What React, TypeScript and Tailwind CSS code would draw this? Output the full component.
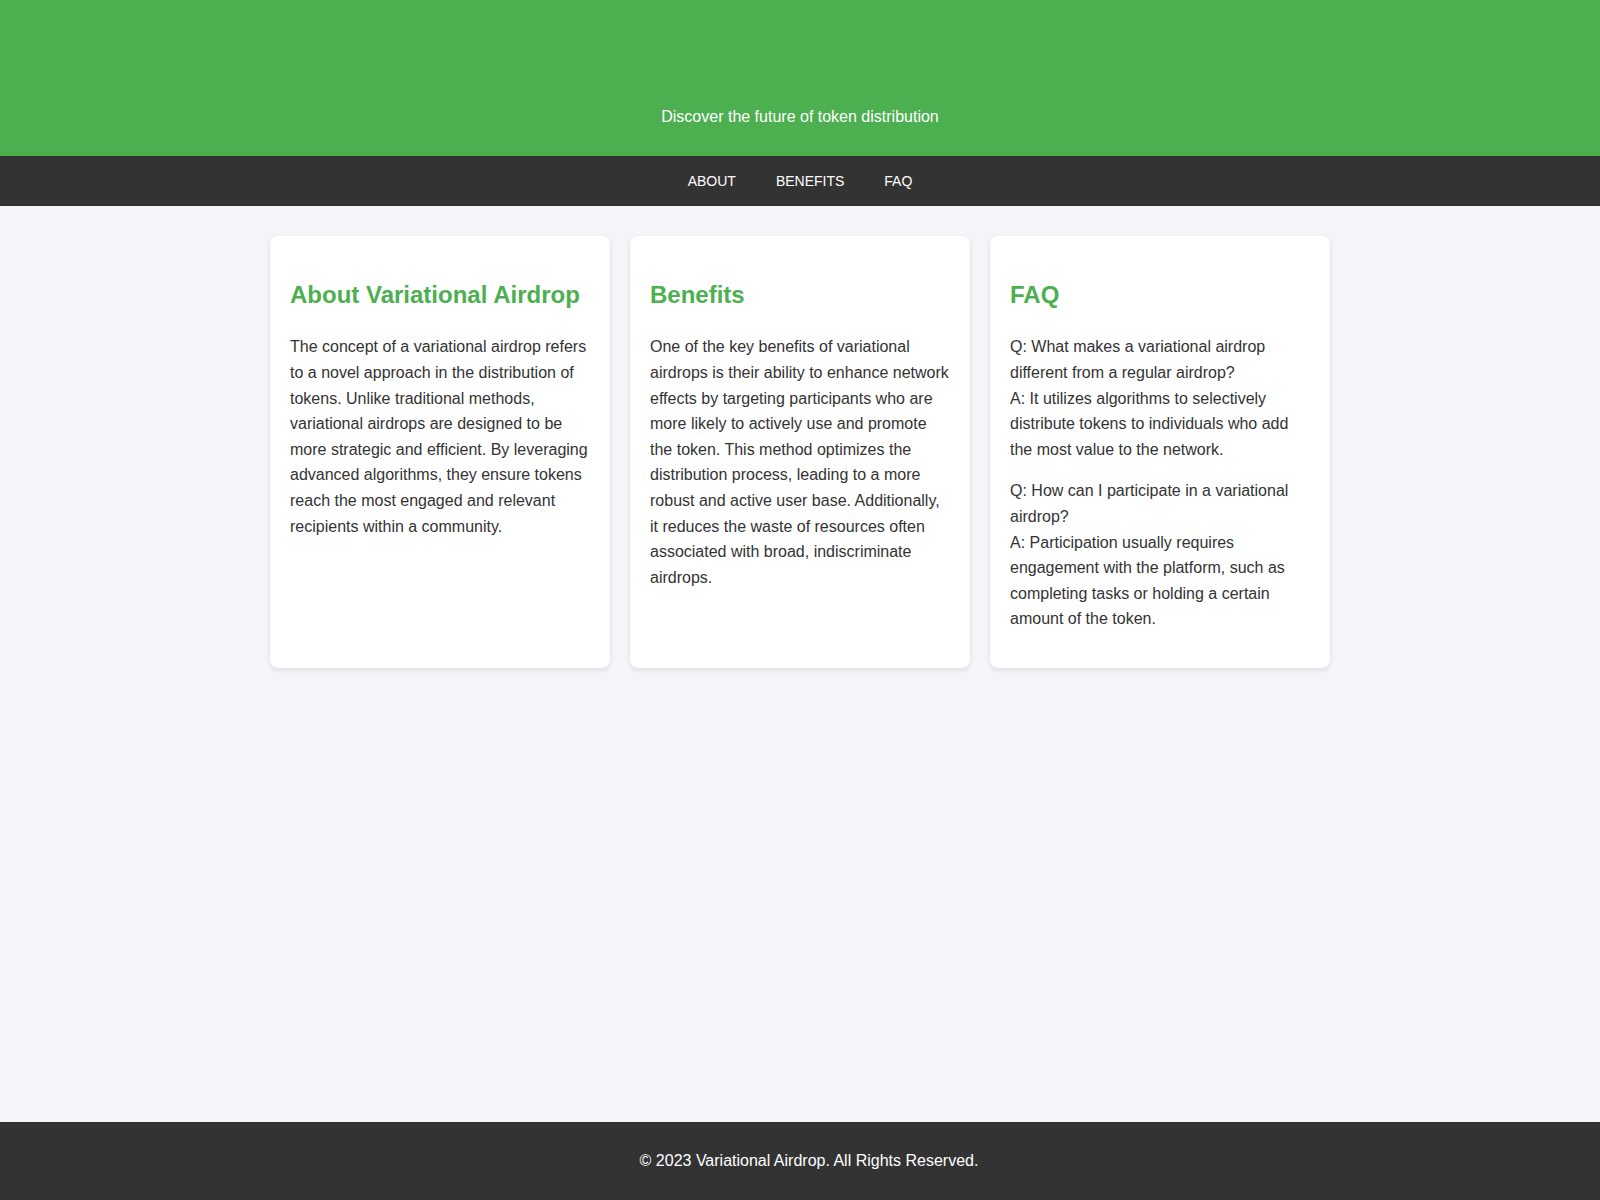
export default function App() {
  const font = { fontFamily: '"Liberation Sans", Arial, sans-serif' };
  return (
    <div className="min-h-screen flex flex-col bg-[#f4f4f9] text-[#333] leading-[1.6]" style={font}>
      <header className="h-[156px] bg-[#4caf50] text-white text-center pt-[104px] shrink-0">
        <p className="text-[16px] leading-[25.6px]">Discover the future of token distribution</p>
      </header>
      <nav className="h-[50px] bg-[#333] flex items-center justify-center shrink-0">
        <a className="text-white text-[14px] uppercase mx-[20px]" href="#about">About</a>
        <a className="text-white text-[14px] uppercase mx-[20px]" href="#benefits">Benefits</a>
        <a className="text-white text-[14px] uppercase mx-[20px]" href="#faq">FAQ</a>
      </nav>
      <main className="flex-1 w-full max-w-[1100px] mx-auto px-[20px] pt-[30px]">
        <div className="flex gap-[20px] items-stretch">
          <section className="flex-1 bg-white rounded-[8px] shadow-[0_2px_5px_rgba(0,0,0,0.1)] p-[20px]">
            <h2 className="text-[24px] font-bold text-[#4caf50] leading-[38.4px] mt-[20px] mb-[20px]">About Variational Airdrop</h2>
            <p className="text-[16px] mb-[16px]">
              The concept of a variational airdrop refers to a novel approach in the distribution of tokens. Unlike traditional methods, variational airdrops are designed to be more strategic and efficient. By leveraging advanced algorithms, they ensure tokens reach the most engaged and relevant recipients within a community.
            </p>
          </section>
          <section className="flex-1 bg-white rounded-[8px] shadow-[0_2px_5px_rgba(0,0,0,0.1)] p-[20px]">
            <h2 className="text-[24px] font-bold text-[#4caf50] leading-[38.4px] mt-[20px] mb-[20px]">Benefits</h2>
            <p className="text-[16px] mb-[16px]">
              One of the key benefits of variational airdrops is their ability to enhance network effects by targeting participants who are more likely to actively use and promote the token. This method optimizes the distribution process, leading to a more robust and active user base. Additionally, it reduces the waste of resources often associated with broad, indiscriminate airdrops.
            </p>
          </section>
          <section className="flex-1 bg-white rounded-[8px] shadow-[0_2px_5px_rgba(0,0,0,0.1)] p-[20px]">
            <h2 className="text-[24px] font-bold text-[#4caf50] leading-[38.4px] mt-[20px] mb-[20px]">FAQ</h2>
            <p className="text-[16px] mb-[16px]">
              Q: What makes a variational airdrop different from a regular airdrop?<br />
              A: It utilizes algorithms to selectively distribute tokens to individuals who add the most value to the network.
            </p>
            <p className="text-[16px] mb-[16px]">
              Q: How can I participate in a variational airdrop?<br />
              A: Participation usually requires engagement with the platform, such as completing tasks or holding a certain amount of the token.
            </p>
          </section>
        </div>
      </main>
      <footer className="h-[78px] bg-[#333] text-white flex items-center justify-center shrink-0 pl-[18px]">
        <p className="text-[16px]">© 2023 Variational Airdrop. All Rights Reserved.</p>
      </footer>
    </div>
  );
}
